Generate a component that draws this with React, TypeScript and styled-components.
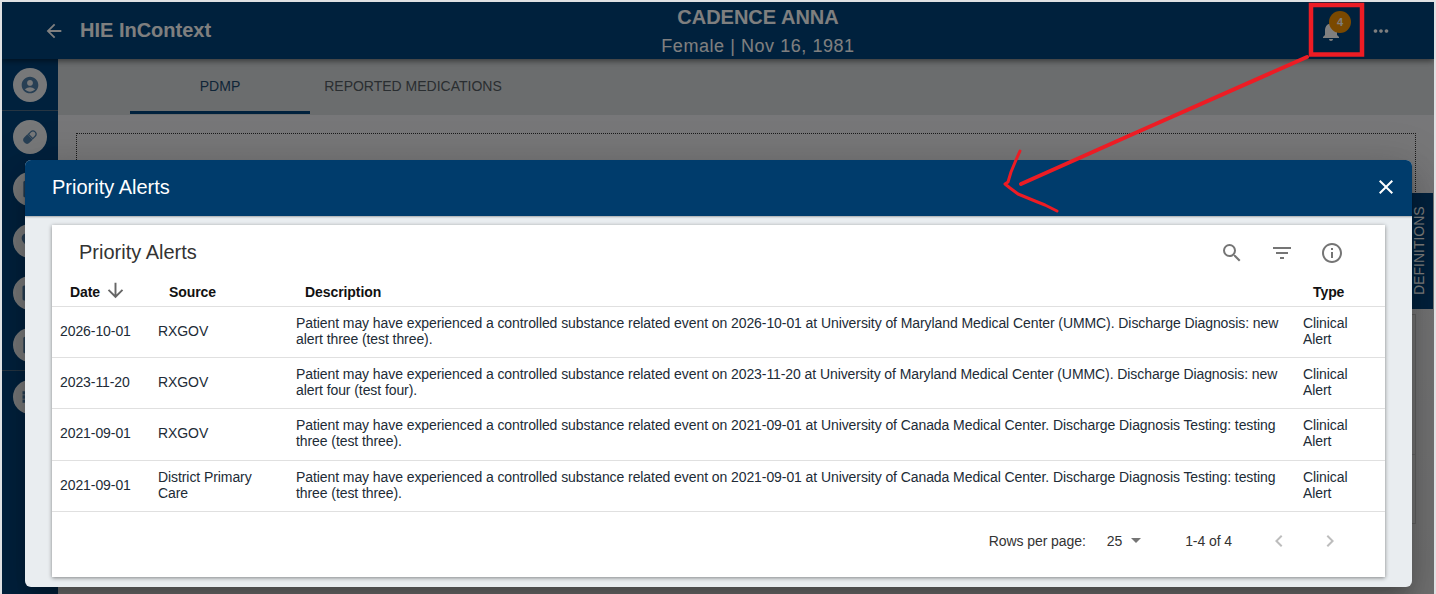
import React from "react";
import styled, { createGlobalStyle } from "styled-components";
import {
  MdAccountCircle, MdArrowBack, MdArrowDownward, MdArrowDropDown, MdChevronLeft, MdChevronRight,
  MdClose, MdDescription, MdFilterList, MdFavorite, MdInfoOutline, MdLocalHospital, MdMoreHoriz,
  MdNotifications, MdSearch, MdViewList,
} from "react-icons/md";

const Global = createGlobalStyle`
  html, body { margin: 0; padding: 0; width: 1436px; height: 594px; overflow: hidden; background: #dfe1e3; }
  * { box-sizing: border-box; }
  body { font-family: "Liberation Sans", Arial, sans-serif; }
`;

const Frame = styled.div`
  width: 1436px;
  height: 594px;
  padding: 2px 2px 0 2px;
  position: relative;
`;
const Stage = styled.div`
  position: relative;
  width: 100%;
  height: 100%;
  overflow: hidden;
  display: flex;
  flex-direction: column;
  background: #eceef0;
`;
const TopBar = styled.header`
  height: 57px;
  flex: none;
  display: flex;
  align-items: center;
  background: #00427a;
  color: #fff;
  box-shadow: 0 2px 6px rgba(0, 0, 0, 0.5);
  position: relative;
  z-index: 2;
`;
const BackGroup = styled.div`
  width: 208px;
  display: flex;
  align-items: center;
  gap: 15px;
  padding-left: 41px;
  font-size: 20px;
  font-weight: 700;
  white-space: nowrap;
  svg { flex: none; }
`;
const Patient = styled.div`
  flex: 1;
  text-align: center;
  align-self: stretch;
  padding-top: 4px;
`;
const PatientName = styled.div`
  font-size: 20px;
  font-weight: 700;
  line-height: 23px;
`;
const PatientMeta = styled.div`
  font-size: 18px;
  line-height: 20px;
  margin-top: 7px;
  letter-spacing: 0.55px;
`;
const BarActions = styled.div`
  width: 128px;
  display: flex;
  align-items: center;
  padding-left: 13px;
  gap: 27px;
`;
const Bell = styled.div`
  position: relative;
  width: 24px;
  height: 24px;
  display: flex;
`;
const Badge = styled.span`
  position: absolute;
  left: 10px;
  top: -8px;
  width: 22px;
  height: 22px;
  border-radius: 50%;
  background: #f59200;
  color: #fff;
  font-size: 11px;
  font-weight: 700;
  display: flex;
  align-items: center;
  justify-content: center;
`;
const Body = styled.div`
  flex: 1;
  display: flex;
  min-height: 0;
`;
const Rail = styled.nav`
  width: 56px;
  flex: none;
  background: #00427a;
  display: flex;
  flex-direction: column;
`;
const RailItem = styled.div<{ $divided?: boolean }>`
  height: 52px;
  flex: none;
  display: flex;
  align-items: center;
  justify-content: center;
  border-bottom: 1px solid ${(p) => (p.$divided ? "#4d6b85" : "transparent")};
`;
const RailDisc = styled.div`
  width: 34px;
  height: 34px;
  border-radius: 50%;
  background: #eef1f3;
  color: #4f7ea8;
  display: flex;
  align-items: center;
  justify-content: center;
`;
const Main = styled.main`
  flex: 1;
  min-width: 0;
  display: flex;
  flex-direction: column;
  background: #eeeef1;
`;
const Tabs = styled.div`
  height: 56px;
  flex: none;
  display: flex;
  padding-left: 72px;
  background: #d6dadc;
`;
const Tab = styled.div<{ $active?: boolean }>`
  height: 55px;
  width: ${(p) => (p.$active ? "180px" : "206px")};
  padding-top: 2px;
  display: flex;
  align-items: center;
  justify-content: center;
  font-size: 14px;
  color: ${(p) => (p.$active ? "#1f4a70" : "#555c62")};
  border-bottom: 3px solid ${(p) => (p.$active ? "#00427a" : "transparent")};
`;
const Content = styled.div`
  flex: 1;
  padding: 18px 18px 0;
  display: flex;
  flex-direction: column;
  min-height: 0;
  background: linear-gradient(#efeff2, #e2e2e2);
`;
const DottedBox = styled.div`
  height: 171px;
  flex: none;
  border: 1px dotted #333;
  border-bottom: none;
`;
const Panel = styled.div`
  height: 210px;
  flex: none;
  margin-top: 10px;
  border: 1px solid #c0c0c0;
  display: flex;
  flex-direction: column;
  background: #e4e4e4;
`;
const PanelRow = styled.div`
  height: 140px;
  border-bottom: 1px solid #c8c8c8;
`;
const DefinitionsTab = styled.div`
  position: absolute;
  right: 1px;
  top: 191px;
  width: 22px;
  height: 116px;
  padding-left: 6px;
  background: #00427a;
  color: #fff;
  writing-mode: vertical-rl;
  transform: rotate(180deg);
  font-size: 14px;
  display: flex;
  align-items: center;
  justify-content: center;
`;
const Scrim = styled.div`
  position: absolute;
  inset: 0;
  background: rgba(0, 0, 0, 0.5);
  z-index: 5;
`;
const Modal = styled.section`
  position: absolute;
  left: 23px;
  top: 158px;
  width: 1387px;
  height: 427px;
  z-index: 6;
  background: #e9edf0;
  border-radius: 6px;
  box-shadow: 0 11px 15px -7px rgba(0, 0, 0, 0.2), 0 24px 38px 3px rgba(0, 0, 0, 0.14), 0 9px 46px 8px rgba(0, 0, 0, 0.12);
  display: flex;
  flex-direction: column;
`;
const ModalHeader = styled.div`
  height: 56px;
  flex: none;
  background: #003c6c;
  border-radius: 6px 6px 0 0;
  display: flex;
  align-items: center;
  justify-content: space-between;
  padding: 0 14px 2px 27px;
  color: #fff;
  font-size: 20px;
  box-shadow: 0 1px 2px rgba(0, 0, 0, 0.3);
`;
const CardPaper = styled.div`
  margin: 9px 27px 10px;
  flex: 1;
  background: #fff;
  box-shadow: 0 1px 4px rgba(0, 0, 0, 0.45);
  display: flex;
  flex-direction: column;
`;
const PaperBar = styled.div`
  height: 55px;
  flex: none;
  display: flex;
  align-items: center;
  justify-content: space-between;
  padding: 0 28px 0 27px;
  font-size: 20px;
  color: #333;
`;
const PaperActions = styled.div`
  display: flex;
  color: #757575;
`;
const IconSlot = styled.span`
  width: 50px;
  display: flex;
  justify-content: center;
`;
const Table = styled.table`
  width: 1333px;
  border-collapse: collapse;
  table-layout: fixed;
  font-size: 14px;
  letter-spacing: -0.08px;
  color: #212b36;
`;
const HeadRow = styled.tr`
  height: 26px;
  border-bottom: 1px solid #e0e0e0;
`;
const Th = styled.th<{ $w: number; $pad: number }>`
  width: ${(p) => p.$w}px;
  padding: 0 0 2px ${(p) => p.$pad}px;
  text-align: left;
  font-weight: 700;
  color: #111;
`;
const SortLabel = styled.span`
  display: inline-flex;
  align-items: center;
  gap: 4px;
  svg { color: #666; margin-top: -3px; }
`;
const Row = styled.tr<{ $h: number }>`
  height: ${(p) => p.$h}px;
  border-bottom: 1px solid #e0e0e0;
`;
const Td = styled.td`
  padding: 0 8px 2px;
  line-height: 16px;
  vertical-align: middle;
`;
const Footer = styled.div`
  flex: 1;
  display: flex;
  align-items: center;
  justify-content: flex-end;
  padding: 0 43px 6px 0;
  font-size: 14px;
  letter-spacing: -0.08px;
  color: #333;
`;
const RowsLabel = styled.span`
  margin-right: 21px;
`;
const RowsSelect = styled.span`
  display: flex;
  align-items: center;
  margin-right: 37px;
  svg { color: #757575; margin: -3px 0 0 2px; }
`;
const PagerText = styled.span`
  margin-right: 35px;
`;
const Pager = styled.span`
  display: flex;
  gap: 27px;
  color: #bdbdbd;
`;
const Annotation = styled.svg`
  position: absolute;
  left: 0;
  top: 0;
  z-index: 10;
  pointer-events: none;
`;

const rows = [
  ["2026-10-01", "RXGOV", "Patient may have experienced a controlled substance related event on 2026-10-01 at University of Maryland Medical Center (UMMC). Discharge Diagnosis: new alert three (test three).", 51],
  ["2023-11-20", "RXGOV", "Patient may have experienced a controlled substance related event on 2023-11-20 at University of Maryland Medical Center (UMMC). Discharge Diagnosis: new alert four (test four).", 51],
  ["2021-09-01", "RXGOV", "Patient may have experienced a controlled substance related event on 2021-09-01 at University of Canada Medical Center. Discharge Diagnosis Testing: testing three (test three).", 52],
  ["2021-09-01", "District Primary Care", "Patient may have experienced a controlled substance related event on 2021-09-01 at University of Canada Medical Center. Discharge Diagnosis Testing: testing three (test three).", 51],
] as const;

const Capsule = () => (
  <svg width="20" height="20" viewBox="0 0 24 24" fill="currentColor">
    <g transform="rotate(-45 12 12)">
      <path d="M7 7.5h5v9H7a4.5 4.5 0 0 1 0-9z" />
      <path d="M13 8.3h4a3.7 3.7 0 0 1 0 7.4h-4z" fill="none" stroke="currentColor" strokeWidth="1.4" />
    </g>
  </svg>
);

export default function App() {
  return (
    <Frame>
      <Global />
      <Stage>
        <TopBar>
          <BackGroup>
            <MdArrowBack size={22} />
            <span>HIE InContext</span>
          </BackGroup>
          <Patient>
            <PatientName>CADENCE ANNA</PatientName>
            <PatientMeta>Female | Nov 16, 1981</PatientMeta>
          </Patient>
          <BarActions>
            <Bell>
              <MdNotifications size={24} />
              <Badge>4</Badge>
            </Bell>
            <MdMoreHoriz size={22} />
          </BarActions>
        </TopBar>
        <Body>
          <Rail>
            <RailItem $divided><RailDisc><MdAccountCircle size={20} /></RailDisc></RailItem>
            <RailItem><RailDisc><Capsule /></RailDisc></RailItem>
            <RailItem><RailDisc><MdDescription size={20} /></RailDisc></RailItem>
            <RailItem><RailDisc><MdFavorite size={20} /></RailDisc></RailItem>
            <RailItem><RailDisc><MdLocalHospital size={20} /></RailDisc></RailItem>
            <RailItem $divided><RailDisc><MdDescription size={20} /></RailDisc></RailItem>
            <RailItem><RailDisc><MdViewList size={20} /></RailDisc></RailItem>
          </Rail>
          <Main>
            <Tabs>
              <Tab $active>PDMP</Tab>
              <Tab>REPORTED MEDICATIONS</Tab>
            </Tabs>
            <Content>
              <DottedBox />
              <Panel><PanelRow /></Panel>
            </Content>
          </Main>
        </Body>
        <DefinitionsTab>DEFINITIONS</DefinitionsTab>
        <Scrim />
        <Modal>
          <ModalHeader>
            <span>Priority Alerts</span>
            <MdClose size={24} />
          </ModalHeader>
          <CardPaper>
            <PaperBar>
              <span>Priority Alerts</span>
              <PaperActions>
                <IconSlot><MdSearch size={24} /></IconSlot>
                <IconSlot><MdFilterList size={24} /></IconSlot>
                <IconSlot><MdInfoOutline size={24} /></IconSlot>
              </PaperActions>
            </PaperBar>
            <Table>
              <thead>
                <HeadRow>
                  <Th $w={98} $pad={18}><SortLabel>Date <MdArrowDownward size={23} /></SortLabel></Th>
                  <Th $w={138} $pad={19}>Source</Th>
                  <Th $w={1007} $pad={17}>Description</Th>
                  <Th $w={90} $pad={18}>Type</Th>
                </HeadRow>
              </thead>
              <tbody>
                {rows.map((r, i) => (
                  <Row key={i} $h={r[3]}>
                    <Td>{r[0]}</Td>
                    <Td>{r[1]}</Td>
                    <Td>{r[2]}</Td>
                    <Td>Clinical Alert</Td>
                  </Row>
                ))}
              </tbody>
            </Table>
            <Footer>
              <RowsLabel>Rows per page:</RowsLabel>
              <RowsSelect>25 <MdArrowDropDown size={24} /></RowsSelect>
              <PagerText>1-4 of 4</PagerText>
              <Pager>
                <MdChevronLeft size={24} />
                <MdChevronRight size={24} />
              </Pager>
            </Footer>
          </CardPaper>
        </Modal>
      </Stage>
      <Annotation width="1436" height="594" viewBox="0 0 1436 594" fill="none" stroke="#ed1c24">
        <rect x="1311" y="5" width="51" height="49.5" strokeWidth="4.5" />
        <path d="M1307 57 L1133 134 L1021 184" strokeWidth="4" strokeLinecap="round" />
        <path d="M1020 151 L1016 160 L1011 172 L1008 182 L1005 184 L1010 188 L1018 194 L1035 201 L1045 205 L1057 211" strokeWidth="3" strokeLinecap="round" strokeLinejoin="round" />
      </Annotation>
    </Frame>
  );
}
